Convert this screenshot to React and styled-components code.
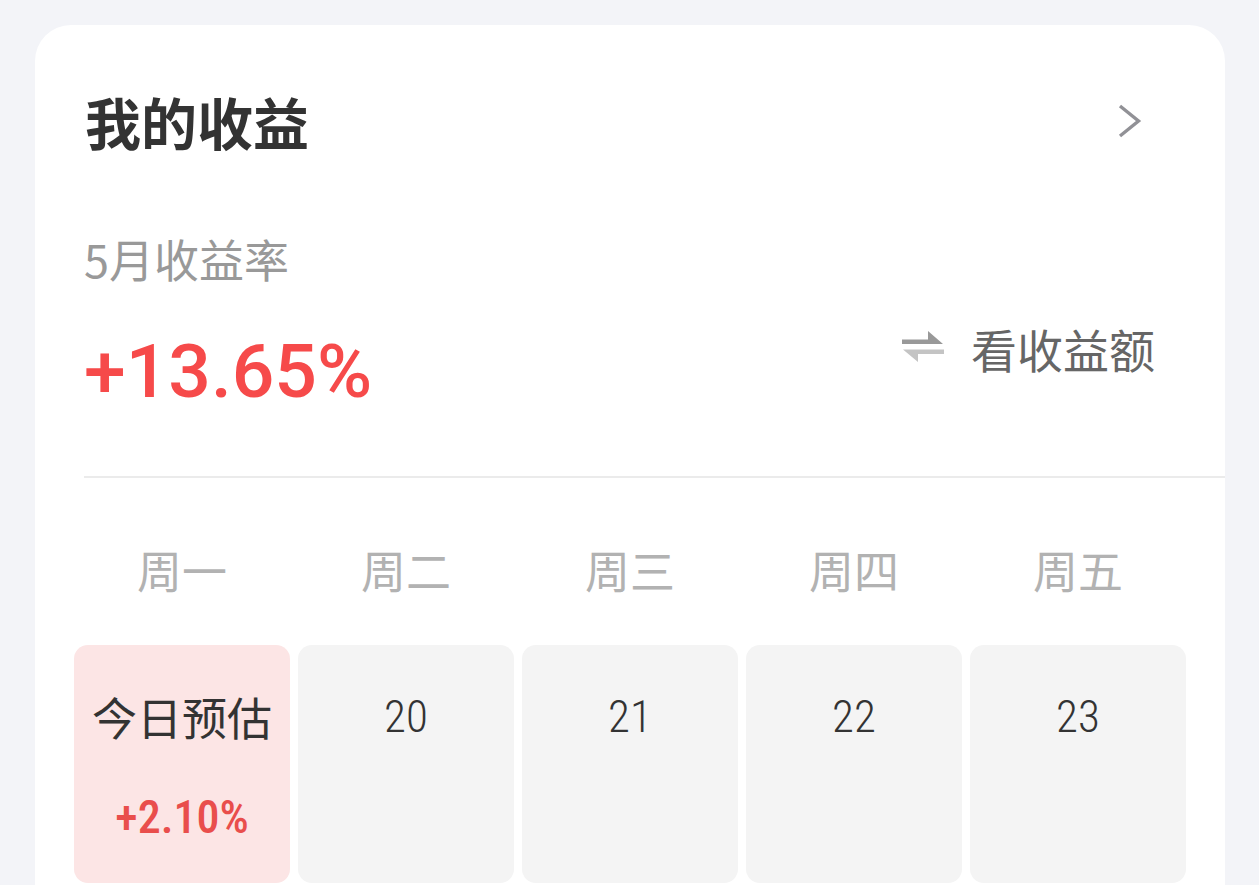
import React from 'react';
import styled, { createGlobalStyle } from 'styled-components';

const GlobalStyle = createGlobalStyle`
  * {
    box-sizing: border-box;
  }

  body {
    margin: 0;
    background-color: #f3f4f8;
    font-family: "Noto Sans CJK SC", sans-serif;
    color: #333333;
  }

  button {
    border: none;
    background: none;
    padding: 0;
    font-family: inherit;
    color: inherit;
    cursor: pointer;
  }
`

const Page = styled.div`
  min-height: 100vh;
  padding: 25px 34px 0 35px;
  display: flex;
  flex-direction: column;
`

const Card = styled.section`
  flex: 1;
  background-color: white;
  border-radius: 36px 36px 0 0;
`

const Header = styled.header`
  display: flex;
  align-items: center;
  justify-content: space-between;
  padding: 60px 83px 0 50px;
`

const Title = styled.h1`
  margin: 0;
  font-size: 56px;
  line-height: 72px;
  font-weight: 700;
`

const MoreButton = styled.button`
  display: flex;
`

const Summary = styled.div`
  margin-left: 49px;
  padding: 70px 70px 63px 0;
  display: flex;
  align-items: flex-end;
  justify-content: space-between;
  border-bottom: 2px solid #ebebeb;
`

const Label = styled.div`
  font-size: 45px;
  line-height: 64px;
  color: #999999;
`

const Total = styled.div`
  margin-top: 38px;
  font-family: Roboto, sans-serif;
  font-size: 75px;
  line-height: 84px;
  font-weight: 500;
  color: #f64a4a;
`

const SwitchButton = styled.button`
  display: flex;
  align-items: center;
  gap: 26px;
  padding-bottom: 33px;
  font-size: 46px;
  line-height: 64px;
  color: #666666;
`

const WeekWrap = styled.div`
  padding: 60px 31px 2px;
`

const Week = styled.table`
  width: 100%;
  table-layout: fixed;
  border-collapse: separate;
  border-spacing: 8px 0;
`

const WeekDay = styled.th`
  height: 107px;
  padding: 0;
  vertical-align: top;
  font-size: 45px;
  line-height: 64px;
  font-weight: 400;
  color: #b2b2b2;
`

const Day = styled.td`
  height: 238px;
  padding: 40px 0 0;
  vertical-align: top;
  text-align: center;
  border-radius: 14px;
  background-color: ${({ $today }) => ($today ? '#fce5e5' : '#f4f4f4')};
`

const DayName = styled.div`
  font-family: ${({ $number }) => ($number ? '"Roboto Condensed", Roboto, sans-serif' : 'inherit')};
  font-size: 45px;
  line-height: 64px;
  font-weight: ${({ $number }) => ($number ? 300 : 400)};
  white-space: nowrap;
`

const DayRate = styled.div`
  margin-top: 36px;
  font-family: "Roboto Condensed", Roboto, sans-serif;
  font-size: 46px;
  line-height: 64px;
  font-weight: 500;
  color: #e94e4c;
`

const weekDays = ['周一', '周二', '周三', '周四', '周五'];

const days = [
    { name: '今日预估', rate: '+2.10%', today: true },
    { name: '20' },
    { name: '21' },
    { name: '22' },
    { name: '23' },
];

const ArrowIcon = () => (
    <svg width="24" height="34" viewBox="0 0 24 34" fill="none" aria-hidden="true">
        <path d="M2 2L20.500 17L2 32" stroke="#919196" strokeWidth="3.400"/>
    </svg>
)

const SwitchIcon = () => (
    <svg width="44" height="34" viewBox="0 0 44 34" aria-hidden="true">
        <path d="M1 8.500H27V0L42 13H1Z" fill="#999999"/>
        <path d="M43 18.500H2L17 31V23H43Z" fill="#c4c4c4"/>
    </svg>
)

const App = () => {
    return (
        <Page>
            <GlobalStyle/>
            <Card>
                <Header>
                    <Title>我的收益</Title>
                    <MoreButton type="button" aria-label="更多收益">
                        <ArrowIcon/>
                    </MoreButton>
                </Header>
                <Summary>
                    <div>
                        <Label>5月收益率</Label>
                        <Total>+13.65%</Total>
                    </div>
                    <SwitchButton type="button">
                        <SwitchIcon/>
                        看收益额
                    </SwitchButton>
                </Summary>
                <WeekWrap>
                    <Week>
                        <thead>
                            <tr>
                                {weekDays.map((day) => (
                                    <WeekDay key={day} scope="col">{day}</WeekDay>
                                ))}
                            </tr>
                        </thead>
                        <tbody>
                            <tr>
                                {days.map(({ name, rate, today }) => (
                                    <Day key={name} $today={today}>
                                        <DayName $number={!today}>{name}</DayName>
                                        {rate && <DayRate>{rate}</DayRate>}
                                    </Day>
                                ))}
                            </tr>
                        </tbody>
                    </Week>
                </WeekWrap>
            </Card>
        </Page>
    );
};

export default App;
